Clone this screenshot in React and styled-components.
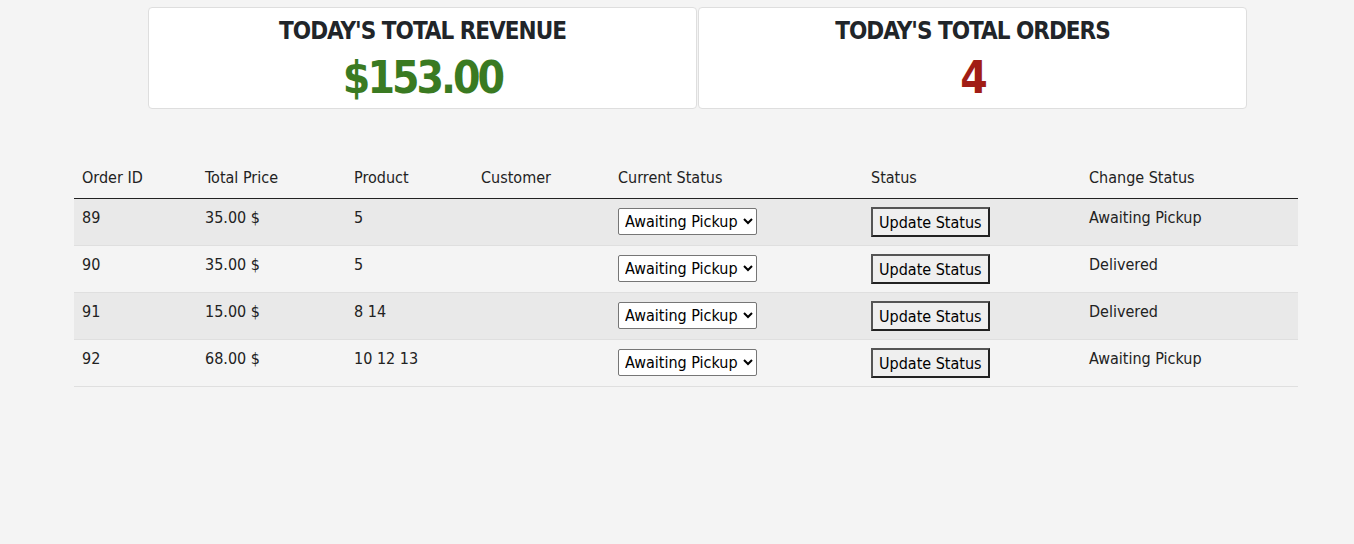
import React from 'react'
import styled, { createGlobalStyle } from "styled-components";

const GlobalStyle = createGlobalStyle`
  body {
    margin: 0;
    background: #f4f4f4;
    font-family: "DejaVu Sans Condensed", "DejaVu Sans", sans-serif;
    color: #222;
  }
`;

const Page = styled.div`
  display: flex;
  flex-direction: column;
  align-items: flex-start;
  padding: 7px 0 0 74px;
  min-height: 544px;
  box-sizing: border-box;
`;

const StatsRow = styled.div`
  display: flex;
  gap: 1px;
  width: 1099px;
  margin-left: 74px;
`;

const StatCard = styled.div`
  flex: 1;
  height: 102px;
  box-sizing: border-box;
  background: #fff;
  border: 1px solid #dedede;
  border-radius: 4px;
  display: flex;
  flex-direction: column;
  align-items: center;
  padding-top: 8px;
`;

const StatTitle = styled.div`
  font-size: 24px;
  font-weight: 600;
  letter-spacing: -1px;
  color: #212529;
  line-height: 30px;
`;

const StatValue = styled.div`
  font-size: 44px;
  font-weight: 700;
  letter-spacing: -3px;
  line-height: 58px;
  margin-top: 3px;
  color: ${(p) => p.$color};
`;

const Table = styled.table`
  width: 1224px;
  margin-top: 49px;
  border-collapse: collapse;
  table-layout: fixed;
  font-size: 16px;
`;

const HeadCell = styled.th`
  text-align: left;
  font-weight: 400;
  padding: 8px;
  line-height: 24px;
  border-bottom: 1px solid #222;
  white-space: nowrap;
`;

const Row = styled.tr`
  background: ${(p) => (p.$striped ? "#e9e9e9" : "#f4f4f4")};
  border-bottom: 1px solid #dfdfdf;
`;

const Cell = styled.td`
  padding: 8px;
  line-height: 22px;
  vertical-align: top;
  white-space: nowrap;
`;

const StatusSelect = styled.select`
  font-family: inherit;
  font-size: 16px;
  color: #000;
  background: #fff;
  border: 1px solid #767676;
  border-radius: 2px;
  height: 27px;
  padding: 0 2px;
  margin-top: 1px;
`;

const UpdateButton = styled.button`
  font-family: inherit;
  font-size: 16px;
  color: #000;
  background: #efefef;
  border: 2px solid;
  border-color: #555 #222 #222 #555;
  height: 30px;
  padding: 0 6px;
`;

const columns = [
  ["Order ID", 123],
  ["Total Price", 149],
  ["Product", 127],
  ["Customer", 137],
  ["Current Status", 253],
  ["Status", 218],
  ["Change Status", 217],
];

const orders = [
  { id: 89, price: "35.00 $", product: "5", change: "Awaiting Pickup" },
  { id: 90, price: "35.00 $", product: "5", change: "Delivered" },
  { id: 91, price: "15.00 $", product: "8 14", change: "Delivered" },
  { id: 92, price: "68.00 $", product: "10 12 13", change: "Awaiting Pickup" },
];

export default function App() {
  return (
    <>
      <GlobalStyle />
      <Page>
        <StatsRow>
          <StatCard>
            <StatTitle>TODAY'S TOTAL REVENUE</StatTitle>
            <StatValue $color="#3a7a22">$153.00</StatValue>
          </StatCard>
          <StatCard>
            <StatTitle>TODAY'S TOTAL ORDERS</StatTitle>
            <StatValue $color="#a11d15">4</StatValue>
          </StatCard>
        </StatsRow>
        <Table>
          <colgroup>
            {columns.map(([name, w]) => (
              <col key={name} style={{ width: w }} />
            ))}
          </colgroup>
          <thead>
            <tr>
              {columns.map(([name]) => (
                <HeadCell key={name}>{name}</HeadCell>
              ))}
            </tr>
          </thead>
          <tbody>
            {orders.map((o, i) => (
              <Row key={o.id} $striped={i % 2 === 0}>
                <Cell>{o.id}</Cell>
                <Cell>{o.price}</Cell>
                <Cell>{o.product}</Cell>
                <Cell></Cell>
                <Cell>
                  <StatusSelect defaultValue="Awaiting Pickup">
                    <option>Awaiting Pickup</option>
                    <option>Delivered</option>
                  </StatusSelect>
                </Cell>
                <Cell>
                  <UpdateButton>Update Status</UpdateButton>
                </Cell>
                <Cell>{o.change}</Cell>
              </Row>
            ))}
          </tbody>
        </Table>
      </Page>
    </>
  );
}
